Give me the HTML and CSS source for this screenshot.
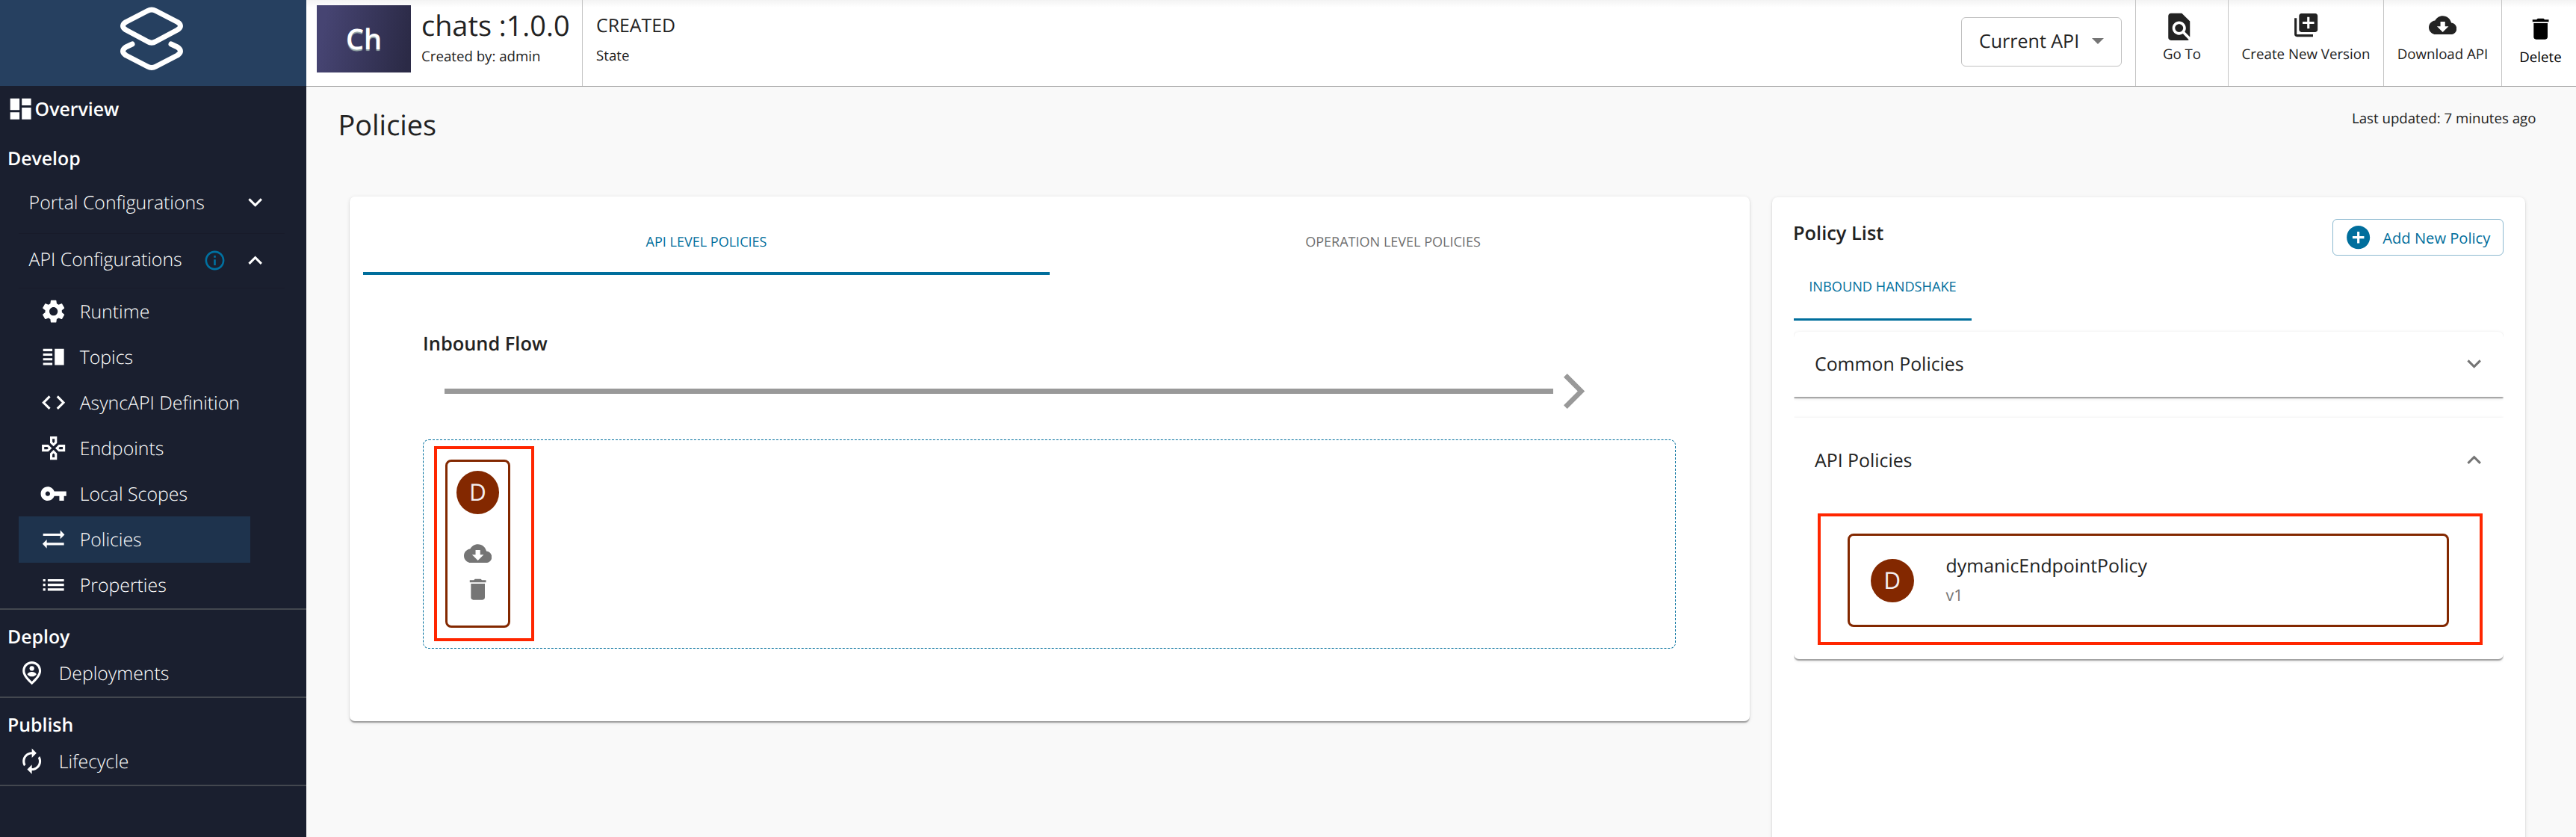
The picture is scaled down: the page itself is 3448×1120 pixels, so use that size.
FILE: index.html
```html
<!DOCTYPE html>
<html lang="en">
<head>
<meta charset="utf-8">
<title>Policies</title>
<link rel="stylesheet" href="styles.css">
</head>
<body>
<svg class="defs" aria-hidden="true">
  <symbol id="dashboard" viewBox="0 0 24 24"><path d="M3 13h8V3H3v10zm0 8h8v-6H3v6zm10 0h8V11h-8v10zm0-18v6h8V3h-8z"/></symbol>
  <symbol id="expand-more" viewBox="0 0 24 24"><path d="M16.59 8.59 12 13.17 7.41 8.59 6 10l6 6 6-6z"/></symbol>
  <symbol id="expand-less" viewBox="0 0 24 24"><path d="m12 8-6 6 1.41 1.41L12 10.83l4.59 4.58L18 14z"/></symbol>
  <symbol id="info" viewBox="0 0 24 24"><path d="M11 7h2v2h-2zm0 4h2v6h-2zm1-9C6.48 2 2 6.48 2 12s4.48 10 10 10 10-4.48 10-10S17.52 2 12 2zm0 18c-4.41 0-8-3.59-8-8s3.59-8 8-8 8 3.59 8 8-3.59 8-8 8z"/></symbol>
  <symbol id="settings" viewBox="0 0 24 24"><path d="M19.14 12.94c.04-.3.06-.61.06-.94 0-.32-.02-.64-.07-.94l2.03-1.58c.18-.14.23-.41.12-.61l-1.92-3.32c-.12-.22-.37-.29-.59-.22l-2.39.96c-.5-.38-1.03-.7-1.62-.94l-.36-2.54c-.04-.24-.24-.41-.48-.41h-3.84c-.24 0-.43.17-.47.41l-.36 2.54c-.59.24-1.13.57-1.62.94l-2.39-.96c-.22-.08-.47 0-.59.22L2.74 8.87c-.12.21-.08.47.12.61l2.03 1.58c-.05.3-.09.63-.09.94s.02.64.07.94l-2.03 1.58c-.18.14-.23.41-.12.61l1.92 3.32c.12.22.37.29.59.22l2.39-.96c.5.38 1.03.7 1.62.94l.36 2.54c.05.24.24.41.48.41h3.84c.24 0 .44-.17.47-.41l.36-2.54c.59-.24 1.13-.56 1.62-.94l2.39.96c.22.08.47 0 .59-.22l1.92-3.32c.12-.22.07-.47-.12-.61l-2.01-1.58zM12 15.6c-1.98 0-3.6-1.62-3.6-3.6s1.62-3.6 3.6-3.6 3.6 1.62 3.6 3.6-1.62 3.6-3.6 3.6z"/></symbol>
  <symbol id="topics" viewBox="0 0 24 24"><path d="M3 15h8v-2H3v2zm0 4h8v-2H3v2zm0-8h8V9H3v2zm0-6v2h8V5H3zm10 0h8v14h-8V5z"/></symbol>
  <symbol id="code" viewBox="0 0 24 24"><path d="M9.4 16.6 4.8 12l4.6-4.6L8 6l-6 6 6 6 1.4-1.4zm5.2 0 4.6-4.6-4.6-4.6L16 6l6 6-6 6-1.4-1.4z"/></symbol>
  <symbol id="gamepad" viewBox="0 0 24 24"><path d="M13 4v2.67l-1 1-1-1V4h2m7 7v2h-2.67l-1-1 1-1H20M6.67 11l1 1-1 1H4v-2h2.67M12 16.33l1 1V20h-2v-2.67l1-1M15 2H9v5.5l3 3 3-3V2zm7 7h-5.500l-3 3 3 3H22V9zM7.500 9H2v6h5.500l3-3-3-3zm4.500 4.500-3 3V22h6v-5.500l-3-3z"/></symbol>
  <symbol id="key" viewBox="0 0 24 24"><path d="M12.650 10C11.830 7.670 9.610 6 7 6c-3.310 0-6 2.690-6 6s2.690 6 6 6c2.610 0 4.830-1.670 5.650-4H17v4h4v-4h2v-4H12.650zM7 14c-1.100 0-2-.9-2-2s.9-2 2-2 2 .9 2 2-.9 2-2 2z"/></symbol>
  <symbol id="swap" viewBox="0 0 24 24"><path d="M21.500 8 17.800 4.200V7H3v2h14.800v2.800zM2.500 16l3.700 3.800V17H21v-2H6.200v-2.800z"/></symbol>
  <symbol id="list" viewBox="0 0 24 24"><path d="M3 13h2v-2H3v2zm0 4h2v-2H3v2zm0-8h2V7H3v2zm4 4h14v-2H7v2zm0 4h14v-2H7v2zM7 7v2h14V7H7z"/></symbol>
  <symbol id="pin" viewBox="0 0 24 24"><path fill-rule="evenodd" d="M12 2c4.200 0 8 3.220 8 8.200 0 3.320-2.670 7.250-8 11.800-5.330-4.550-8-8.480-8-11.800C4 5.220 7.800 2 12 2zm0 2c-3.350 0-6 2.570-6 6.200 0 2.340 1.950 5.440 6 9.140 4.050-3.700 6-6.790 6-9.140C18 6.570 15.350 4 12 4z"/><circle cx="12" cy="8" r="2"/><path d="M12 11c-1.900 0-3.500.9-4 2 .9 1.200 2.300 2 4 2s3.100-.8 4-2c-.5-1.100-2.100-2-4-2z"/></symbol>
  <symbol id="cycle" viewBox="0 0 24 24"><path d="M12 6v3l4-4-4-4v3c-4.420 0-8 3.580-8 8 0 1.570.46 3.030 1.240 4.260L6.700 14.800c-.45-.83-.7-1.790-.7-2.800 0-3.310 2.690-6 6-6zm6.760 1.740L17.300 9.200c.44.84.7 1.790.7 2.800 0 3.310-2.690 6-6 6v-3l-4 4 4 4v-3c4.420 0 8-3.580 8-8 0-1.570-.46-3.030-1.240-4.260z"/></symbol>
  <symbol id="find" viewBox="0 0 24 24"><path d="M20 19.590V8l-6-6H6c-1.100 0-1.990.9-1.990 2L4 20c0 1.100.89 2 1.990 2H18c.45 0 .85-.15 1.190-.4l-4.430-4.430c-.8.520-1.740.830-2.760.830-2.760 0-5-2.240-5-5s2.240-5 5-5 5 2.240 5 5c0 1.020-.31 1.960-.83 2.750L20 19.590zM9 13c0 1.660 1.340 3 3 3s3-1.340 3-3-1.340-3-3-3-3 1.340-3 3z"/></symbol>
  <symbol id="library-add" viewBox="0 0 24 24"><path d="M4 6H2v14c0 1.100.9 2 2 2h14v-2H4V6zm16-4H8c-1.100 0-2 .9-2 2v12c0 1.100.9 2 2 2h12c1.100 0 2-.9 2-2V4c0-1.100-.9-2-2-2zm-1 9h-4v4h-2v-4H9V9h4V5h2v4h4v2z"/></symbol>
  <symbol id="cloud" viewBox="0 0 24 24"><path d="M19.350 10.040C18.670 6.590 15.640 4 12 4 9.110 4 6.600 5.640 5.350 8.040 2.340 8.360 0 10.910 0 14c0 3.310 2.690 6 6 6h13c2.760 0 5-2.240 5-5 0-2.640-2.050-4.780-4.650-4.960zM17 13l-5 5-5-5h3V9h4v4h3z"/></symbol>
  <symbol id="trash" viewBox="0 0 24 24"><path d="M6 19c0 1.100.9 2 2 2h8c1.100 0 2-.9 2-2V7H6v12zM19 4h-3.500l-1-1h-5l-1 1H5v2h14V4z"/></symbol>
  <symbol id="add-circle" viewBox="0 0 24 24"><path d="M12 2C6.480 2 2 6.480 2 12s4.480 10 10 10 10-4.480 10-10S17.520 2 12 2zm5 11h-4v4h-2v-4H7v-2h4V7h2v4h4v2z"/></symbol>
</svg>
<div class="app">
  <aside class="sidebar">
    <div class="logo">
      <svg width="92" height="92" viewBox="157 5 92 92" fill="none" stroke="#fff" stroke-width="7" stroke-linecap="round" stroke-linejoin="round">
        <path d="M197.500 14.500Q203 11.500 208.500 14.500L237.500 29.500Q245.500 34.500 237.500 40L208.500 55.500Q203 59 197.500 55.500L168.500 40Q160.500 34.500 168.500 29.500Z"/>
        <path d="M177 59 168.500 63Q160.500 68.500 168.500 74L197.500 89Q203 92 208.500 89L237.500 74Q245.500 68.500 237.500 63L229 59"/>
      </svg>
    </div>
    <nav>
      <a class="overview"><svg class="icon"><use href="#dashboard"/></svg>Overview</a>
      <h2 class="heading develop">Develop</h2>
      <div class="group portal"><span>Portal Configurations</span><svg class="icon"><use href="#expand-more"/></svg></div>
      <div class="group api"><span>API Configurations</span><svg class="icon info"><use href="#info"/></svg><svg class="icon"><use href="#expand-less"/></svg></div>
      <div class="items">
        <a class="item"><svg class="icon"><use href="#settings"/></svg>Runtime</a>
        <a class="item"><svg class="icon"><use href="#topics"/></svg>Topics</a>
        <a class="item"><svg class="icon"><use href="#code"/></svg>AsyncAPI Definition</a>
        <a class="item"><svg class="icon"><use href="#gamepad"/></svg>Endpoints</a>
        <a class="item"><svg class="icon"><use href="#key"/></svg>Local Scopes</a>
        <a class="item active"><svg class="icon"><use href="#swap"/></svg>Policies</a>
        <a class="item"><svg class="icon"><use href="#list"/></svg>Properties</a>
      </div>
      <section class="section">
        <h2 class="heading">Deploy</h2>
        <a class="link"><svg class="icon"><use href="#pin"/></svg>Deployments</a>
      </section>
      <section class="section">
        <h2 class="heading">Publish</h2>
        <a class="link"><svg class="icon"><use href="#cycle"/></svg>Lifecycle</a>
      </section>
    </nav>
  </aside>

  <div class="page">
    <header class="topbar">
      <div class="thumb">Ch</div>
      <div class="api-name"><h1>chats :1.0.0</h1><p>Created by: admin</p></div>
      <div class="state"><strong>CREATED</strong><p>State</p></div>
      <div class="select"><span>Current API</span><span class="caret"></span></div>
      <a class="action goto"><svg class="icon"><use href="#find"/></svg>Go To</a>
      <a class="action create"><svg class="icon"><use href="#library-add"/></svg>Create New Version</a>
      <a class="action download"><svg class="icon"><use href="#cloud"/></svg>Download API</a>
      <a class="action delete"><svg class="icon"><use href="#trash"/></svg>Delete</a>
    </header>

    <div class="title-row"><h2>Policies</h2><p>Last updated: 7 minutes ago</p></div>

    <main class="columns">
      <section class="card flow-card">
        <div class="tabs"><div class="tab selected">API LEVEL POLICIES</div><div class="tab">OPERATION LEVEL POLICIES</div></div>
        <div class="flow">
          <h3>Inbound Flow</h3>
          <div class="arrow">
            <div class="arrow-line"></div>
            <svg width="30" height="47" viewBox="0 0.5 30 47" fill="#999"><path d="M5.700.5 29.200 24 5.700 47.500 1 42.800 19.800 24 1 5.200z"/></svg>
          </div>
          <div class="dropzone">
            <div class="mark">
              <div class="attached">
                <div class="avatar">D</div>
                <svg class="icon cloud"><use href="#cloud"/></svg>
                <svg class="icon"><use href="#trash"/></svg>
              </div>
            </div>
          </div>
        </div>
      </section>

      <section class="card list-card">
        <div class="list-head"><h3>Policy List</h3><button class="add"><svg class="icon"><use href="#add-circle"/></svg>Add New Policy</button></div>
        <div class="list-tab">INBOUND HANDSHAKE</div>
        <div class="accordions">
          <div class="accordion common"><span>Common Policies</span><svg class="icon"><use href="#expand-more"/></svg></div>
          <div class="accordion api-policies">
            <div class="summary"><span>API Policies</span><svg class="icon"><use href="#expand-less"/></svg></div>
            <div class="mark wide">
              <div class="policy">
                <div class="avatar">D</div>
                <div><p class="policy-name">dymanicEndpointPolicy</p><p class="policy-version">v1</p></div>
              </div>
            </div>
          </div>
        </div>
      </section>
    </main>
  </div>
</div>
</body>
</html>
```
FILE: styles.css
```css
* { box-sizing: border-box; }
body {
  margin: 0;
  font-family: "Open Sans", "Noto Sans", sans-serif;
  font-size: 24.85px;
  line-height: 36px;
  color: #222;
  background: #f9f9f9;
  overflow: hidden;
  text-rendering: geometricPrecision;
}
h1, h2, h3, p { margin: 0; font-weight: 400; }
.defs { position: absolute; width: 0; height: 0; }
.icon { display: block; width: 37.3px; height: 37.3px; flex: none; fill: currentColor; }
.app { display: flex; height: 1120px; }

/* Sidebar */
.sidebar { width: 410px; flex: none; background: #1a1f2f; color: #fff; font-weight: 300; }
.logo { height: 115px; padding: 5px 0 0 157px; background: #264060; }
.logo svg { display: block; }
.overview { display: flex; align-items: center; height: 61px; padding-left: 9.3px; font-weight: 600; line-height: 34px; }
.heading { font-size: 24.85px; font-weight: 600; padding-left: 10px; }
.develop { margin-top: 18px; }
.group { display: flex; align-items: center; margin: 0 29px 0 25px; padding: 0 21px 0 13.6px; border-bottom: 1px solid #181b2a; }
.group span { flex: 1; }
.portal { height: 83px; }
.api { height: 73px; padding-bottom: 5px; }
.info { width: 31px; height: 31px; margin-right: 20px; color: #0071a1; }
.api .icon { margin-top: 4px; }
.items { padding: 0 75px 0 25px; }
.item { display: flex; align-items: center; gap: 16px; height: 61.1px; padding-left: 28.4px; }
.item.active { background: #1e334d; }
.section { height: 118px; padding-top: 18px; border-bottom: 2px solid #43474f; }
.items + .section { border-top: 2px solid #43474f; height: 120px; }
.link { display: flex; align-items: center; gap: 17px; height: 36px; margin-top: 13px; padding-left: 24.4px; }

/* Top bar */
.page { flex: 1; min-width: 0; display: flex; flex-direction: column; }
.topbar {
  display: flex;
  height: 116px;
  flex: none;
  background: linear-gradient(#f3f3f3, #fff 10px);
  border-bottom: 1px solid #a0a0a0;
}
.thumb {
  width: 126px; height: 90px; margin: 7px 0 0 14px;
  background: linear-gradient(100deg, #464472 10%, #2b2a46 95%);
  color: #fff; font-size: 38px; font-weight: 600; line-height: 90px; text-align: center;
  text-shadow: 0 2px 1px #9aa;
}
.api-name { width: 230px; padding: 11px 0 0 14px; border-right: 1px solid #c4c4c4; }
.api-name h1 { font-size: 37.87px; line-height: 48px; }
.api-name p, .state p { font-size: 18.68px; line-height: 28px; }
.api-name p { padding-top: 3px; }
.state { padding: 16px 0 0 18px; flex: 1; }
.state strong { display: block; font-weight: 400; }
.state p { padding-top: 9px; }
.select {
  display: flex; justify-content: space-between; align-items: center;
  width: 215px; height: 66px; margin: 23px 18px 0 0; padding: 0 23px 2px;
  border: 1px solid #c0c0c0; border-radius: 6px; background: #fff; font-size: 25px;
}
.caret { border: 8px solid transparent; border-top-color: #757575; border-bottom: 0; margin-bottom: 1px; }
.action {
  display: flex; flex-direction: column; align-items: center;
  border-left: 1px solid #c4c4c4; font-size: 18.7px; line-height: 28px;
}
.goto { width: 124px; padding-top: 14px; }
.goto .icon { width: 43.5px; height: 43.5px; margin: 0 8px 1px 0; }
.create { width: 208px; padding-top: 15px; }
.download { width: 158px; padding-top: 15px; }
.create .icon, .download .icon { margin-bottom: 7px; }
.delete { width: 100px; padding: 20px 0 0 4px; color: #000; }
.delete .icon { margin-bottom: 5.5px; }

/* Title */
.title-row { display: flex; justify-content: space-between; height: 147px; flex: none; padding: 28px 53.5px 0 42.5px; }
.title-row h2 { font-size: 37.87px; line-height: 48px; }
.title-row p { padding-top: 1px; font-size: 18.68px; line-height: 28px; }

/* Cards */
.columns { display: flex; align-items: flex-start; gap: 30px; padding-left: 58px; }
.card, .accordion {
  background: #fff; border-radius: 7px;
  box-shadow: 0 3px 1.5px -1.5px rgba(0,0,0,.2), 0 1.5px 1.5px rgba(0,0,0,.14), 0 1.5px 5px rgba(0,0,0,.12);
}
.flow-card { width: 1874px; height: 702px; padding: 22px 18px 0; }
.tabs { display: flex; }
.tab { flex: 1; height: 83px; line-height: 78px; text-align: center; font-size: 18.05px; color: #6f6f6f; }
.tab.selected { color: #006e9c; border-bottom: 4px solid #006e9c; }
.flow { padding: 74px 81px 0 80px; }
.flow h3, .list-head h3 { font-size: 25.4px; font-weight: 600; }
.arrow { display: flex; align-items: center; gap: 13px; margin: 22px 0 0 29px; }
.arrow-line { width: 1484px; height: 7px; background: #999; }
.dropzone { height: 280px; margin-top: 41px; padding: 8px 14px; border: 1px dashed #006e9c; border-radius: 8px; }
.mark { width: 134px; height: 261px; padding: 14px 11px; border: 4px solid #ff2600; }
.attached {
  display: flex; flex-direction: column; align-items: center;
  width: 87px; height: 225px; padding-top: 12px;
  border: 3px solid #832800; border-radius: 8px;
}
.avatar {
  width: 57.5px; height: 58px; flex: none; border-radius: 50%; background: #832800;
  color: #f3eef0; font-size: 31.5px; line-height: 57px; text-align: center;
}
.attached .cloud { margin: 34px 0 10.5px; }
.attached .icon { color: #757575; }

/* Policy list */
.list-card { width: 1008px; height: 900px; padding: 29px 29px 0; margin-top: 1px; }
.list-head { display: flex; justify-content: space-between; }
.list-head h3 { padding-top: 1px; margin-left: -1px; }
.add {
  display: flex; align-items: center; gap: 14px; width: 229px; height: 49px; padding: 0 0 0 15px;
  border: 1px solid #8cb9d0; border-radius: 6px; background: #fff; color: #006e9c;
  font: 20.15px/28px "Open Sans", sans-serif;
}
.list-tab {
  width: 238px; height: 87px; border-bottom: 3px solid #006e9c; color: #006e9c;
  font-size: 18.2px; line-height: 85px; text-align: center;
}
.accordions { overflow: hidden; padding: 15px 0 6px; }
.accordions .icon { color: #757575; }
.common, .summary { display: flex; justify-content: space-between; align-items: center; padding: 0 21px 0 28px; }
.common { height: 87px; padding-bottom: 2px; border-radius: 7px 7px 0 0; }
.api-policies { height: 323px; margin-top: 28px; border-radius: 0 0 7px 7px; padding-top: 27px; }
.summary { height: 60px; }
.mark.wide { width: 890px; height: 176px; margin: 41px 0 0 32px; padding: 23px 36px; }
.policy {
  display: flex; align-items: center; gap: 43px; width: 805px; height: 125px; padding-left: 28px;
  border: 3px solid #832800; border-radius: 8px;
}
.policy-version { padding-top: 4px; color: #757575; font-size: 21.5px; }
```
